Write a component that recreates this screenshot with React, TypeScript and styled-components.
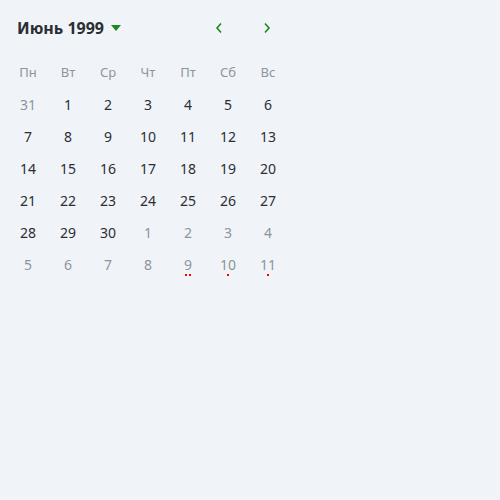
import React from "react";
import styled, { createGlobalStyle } from "styled-components";

const GlobalStyle = createGlobalStyle`
  html, body {
    margin: 0;
    background: #f0f4f8;
    font-family: "Noto Sans", "Open Sans", sans-serif;
  }
`;

const Calendar = styled.div`
  width: 280px;
  padding: 8px;
`;

const Header = styled.div`
  display: flex;
  align-items: center;
  height: 40px;
  margin-bottom: 8px;
`;

const Title = styled.button`
  display: flex;
  align-items: center;
  gap: 7px;
  padding: 0 0 0 9px;
  border: none;
  background: none;
  font-family: inherit;
  font-size: 16px;
  font-weight: 700;
  color: #2b2e33;
  cursor: pointer;
`;

const Caret = styled.span`
  width: 0;
  height: 0;
  border-left: 5px solid transparent;
  border-right: 5px solid transparent;
  border-top: 6px solid #1a8a1a;
`;

const Nav = styled.div`
  display: flex;
  margin-left: auto;
  margin-right: -3px;
`;

const NavButton = styled.button`
  width: 48px;
  height: 32px;
  display: flex;
  align-items: center;
  justify-content: center;
  border: none;
  background: none;
  padding: 0;
  cursor: pointer;
`;

const Grid = styled.div`
  display: grid;
  grid-template-columns: repeat(7, 40px);
  grid-auto-rows: 32px;
`;

const WeekDay = styled.div`
  display: flex;
  align-items: center;
  justify-content: center;
  font-size: 13px;
  color: #8c949c;
`;

const Day = styled.div<{ $muted?: boolean }>`
  position: relative;
  display: flex;
  align-items: center;
  justify-content: center;
  font-size: 14px;
  color: ${(p) => (p.$muted ? "#8c949c" : "#2b2e33")};
`;

const Dots = styled.span`
  position: absolute;
  left: 0;
  right: 0;
  bottom: 4px;
  display: flex;
  justify-content: center;
  gap: 2px;
`;

const Dot = styled.span`
  width: 2px;
  height: 2px;
  background: #ff0000;
`;

const Chevron = ({ dir }: { dir: "left" | "right" }) => (
  <svg width="10" height="12" viewBox="0 0 10 12">
    <path
      d={dir === "left" ? "M7 1.5 L3 6 L7 10.5" : "M3 1.5 L7 6 L3 10.5"}
      fill="none"
      stroke="#1a8a1a"
      strokeWidth="1.6"
    />
  </svg>
);

const weekDays = ["Пн", "Вт", "Ср", "Чт", "Пт", "Сб", "Вс"];

type Cell = { n: number; muted?: boolean; dots?: number };

const days: Cell[] = [
  { n: 31, muted: true },
  ...Array.from({ length: 30 }, (_, i) => ({ n: i + 1 })),
  ...Array.from({ length: 11 }, (_, i) => ({
    n: i + 1,
    muted: true,
    dots: i + 1 === 9 ? 2 : i + 1 >= 10 ? 1 : 0,
  })),
];

const App = () => (
  <>
    <GlobalStyle />
    <Calendar>
      <Header>
        <Title>
          Июнь 1999
          <Caret />
        </Title>
        <Nav>
          <NavButton>
            <Chevron dir="left" />
          </NavButton>
          <NavButton>
            <Chevron dir="right" />
          </NavButton>
        </Nav>
      </Header>
      <Grid>
        {weekDays.map((d) => (
          <WeekDay key={d}>{d}</WeekDay>
        ))}
        {days.map((d, i) => (
          <Day key={i} $muted={d.muted}>
            {d.n}
            {d.dots ? (
              <Dots>
                {Array.from({ length: d.dots }, (_, k) => (
                  <Dot key={k} />
                ))}
              </Dots>
            ) : null}
          </Day>
        ))}
      </Grid>
    </Calendar>
  </>
);

export default App;
